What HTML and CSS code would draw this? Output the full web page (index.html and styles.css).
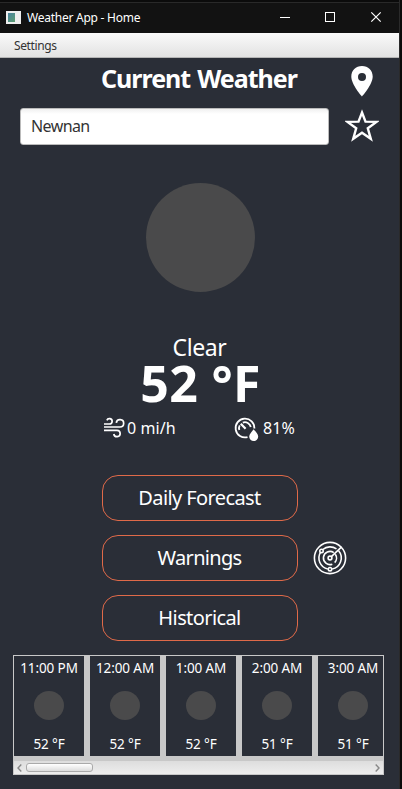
FILE: index.html
```html
<!DOCTYPE html>
<html lang="en">
<head>
<meta charset="utf-8">
<title>Weather App - Home</title>
<link rel="stylesheet" href="styles.css">
</head>
<body>
<div class="window">
  <header class="titlebar">
    <span class="app-icon"></span>
    <span class="app-name">Weather App - Home</span>
    <svg class="controls" width="112" height="30" viewBox="0 0 112 30" fill="none" stroke="#fff" shape-rendering="crispEdges">
      <path d="M0 14.500h10M45.500 9.500h9v9h-9z"/>
      <path d="M91.300 9.300l9.400 9.400M100.700 9.300l-9.400 9.400" stroke-width="1.200" shape-rendering="auto"/>
    </svg>
  </header>
  <nav class="menubar"><span>Settings</span></nav>
  <main>
    <div class="heading">
      <h1>Current Weather</h1>
      <svg class="pin" width="22" height="31" viewBox="0 0 22 31"><path fill="#fff" fill-rule="evenodd" d="M11 0C4.800 0 .3 4.500.3 10.600.3 18.600 11 30.500 11 30.500s10.700-11.900 10.700-19.900C21.700 4.500 17.200 0 11 0zM11 7a4 4 0 1 1 0 8 4 4 0 0 1 0-8z"/></svg>
    </div>
    <div class="search">
      <div class="field"><span>Newnan</span></div>
      <svg class="star" width="34" height="33" viewBox="0 0 34 33"><path fill="none" stroke="#fff" stroke-width="2.400" d="M17 3.500l3.500 9.100 11 .3-8.700 6.400 3 10.500L17 23.700l-8.800 6.100 3-10.500-8.700-6.400 11-.3z"/></svg>
    </div>
    <div class="moon"></div>
    <div class="condition"><span>Clear</span></div>
    <div class="temperature"><span>52 °F</span></div>
    <div class="stats">
      <svg class="wind" width="23" height="22" viewBox="0 0 23 22" fill="none" stroke="#fff" stroke-width="1.700">
        <path d="M1 8H6.500a2.700 2.700 0 1 0-2.600-3.600"/>
        <path d="M1 11H17a3.700 3.700 0 1 0-3.700-4.200"/>
        <path d="M1 14.300H14a3.200 3.200 0 1 1-3.200 3.700"/>
      </svg>
      <span class="wind-value">0 mi/h</span>
      <svg class="humid" width="26" height="25" viewBox="0 0 26 25" fill="none" stroke="#fff" stroke-width="1.800">
        <path d="M13.500 21.100A9.400 9.400 0 1 1 20.400 12.500"/>
        <path d="M5.300 14a6 6 0 0 1 .4-4.600M8.800 6.600a6 6 0 0 1 8 4.400"/>
        <path d="M6.800 7.800l4.800 5" stroke-width="2.200"/>
        <path d="M19.700 13.200c1.800 2.500 4.500 4.800 4.500 7.300a4.500 4.500 0 0 1-9 0c0-2.500 2.700-4.800 4.500-7.300z" fill="#fff" stroke="none"/>
      </svg>
      <span class="humid-value">81%</span>
    </div>
    <div class="actions">
      <button><span class="t1">Daily Forecast</span></button>
      <button><span class="t2">Warnings</span></button>
      <svg class="radar" width="34" height="34" viewBox="0 0 34 34" fill="none" stroke="#fff" stroke-width="1.600">
        <circle cx="17" cy="17" r="15.600"/>
        <path d="M25.600 9.800A11.200 11.200 0 0 1 19.200 28M14.800 28A11.200 11.200 0 0 1 7.600 11.200M9.800 8.500A11.200 11.200 0 0 1 23.500 7.900"/>
        <path d="M22.300 13.200a6.600 6.600 0 0 1-.6 8.400M19.300 23.200A6.600 6.600 0 1 1 20.800 11.600"/>
        <path d="M18.400 15.600L28.600 5.900"/>
        <circle cx="17" cy="17" r="1.900"/>
        <circle cx="8.500" cy="9.900" r="1.700"/>
        <circle cx="17" cy="28.200" r="1.700"/>
      </svg>
      <button><span class="t3">Historical</span></button>
    </div>
    <section class="hours">
      <div class="cards">
        <article><span>11:00 PM</span><i></i><b>52 °F</b></article>
        <article><span>12:00 AM</span><i></i><b>52 °F</b></article>
        <article><span>1:00 AM</span><i></i><b>52 °F</b></article>
        <article><span>2:00 AM</span><i></i><b>51 °F</b></article>
        <article><span>3:00 AM</span><i></i><b>51 °F</b></article>
      </div>
      <div class="scrollbar">
        <svg width="5" height="8" viewBox="0 0 5 8" fill="none" stroke="#888" stroke-width="1.400"><path d="M4.300.5L1 4l3.300 3.500"/></svg>
        <span class="thumb"></span>
        <svg width="5" height="8" viewBox="0 0 5 8" fill="none" stroke="#888" stroke-width="1.400"><path d="M.7.5L4 4 .7 7.500"/></svg>
      </div>
    </section>
  </main>
</div>
</body>
</html>
```
FILE: styles.css
```css
* { box-sizing: border-box; }
body { margin: 0; background: #0b0b0b; overflow: hidden; font-family: "Noto Sans", sans-serif; color: #fff; }
.window { width: 400px; height: 789px; padding-top: 2px; border-right: 1px solid #2a2a2a; }
.titlebar { height: 31px; border-top: 1px solid #292929; background: #121212; display: flex; align-items: center; font-size: 12px; }
.app-icon { width: 15px; height: 13px; margin: -2px 6px 0; border: 2px solid #eee; border-right-width: 6px; background: linear-gradient(135deg, #4a84a0, #5c9d70); }
.app-name { letter-spacing: -.25px; line-height: 28px; margin-bottom: 1px; }
.controls { margin-left: auto; margin-right: 7px; }
.menubar { height: 25px; background: linear-gradient(#fafafa, #e2e2e2); border-bottom: 1px solid #b5b5b5; color: #333; font-size: 12px; line-height: 25px; padding-left: 14px; letter-spacing: -.37px; }
main { height: 731px; background: #2a2e37; }
.heading { height: 50px; display: flex; padding: 0 26px 0 101px; justify-content: space-between; }
h1 { margin: 0; font-size: 25px; line-height: 41px; white-space: nowrap; letter-spacing: -1px; word-spacing: 1.500px; }
.pin { margin-top: 8px; }
.search { display: flex; padding-left: 20px; height: 37px; }
.field { width: 309px; height: 37px; border: 1px solid #bbb; border-radius: 3px; background: linear-gradient(#f0f0f0, #fff 5px); color: #333; font-size: 16px; line-height: 35px; padding-left: 10px; letter-spacing: -.6px; }
.star { margin: 1px 0 0 16px; }
.moon { width: 109px; height: 109px; border-radius: 50%; background: #4a4a4b; margin: 38px auto 0 145.500px; }
.condition { margin-top: 39px; height: 32px; line-height: 32px; text-align: center; font-size: 23px; letter-spacing: -.4px; }
.temperature { height: 42px; line-height: 41px; text-align: center; font-size: 50px; font-weight: 700; letter-spacing: .3px; padding-left: 2px; }
.stats { display: flex; height: 25px; margin-top: 11px; padding-left: 103px; font-size: 16px; line-height: 24px; }
.wind-value { width: 108px; padding-left: 1px; letter-spacing: .1px; }
.humid-value { margin-left: 3px; letter-spacing: .1px; }
.actions { display: grid; grid-template-columns: 196px 34px; grid-auto-rows: 46px; gap: 14px 15px; padding: 34px 0 0 102px; align-items: center; }
button { grid-column: 1; height: 46px; border: 1px solid #df6a49; border-radius: 16px; background: none; color: #fff; font: 20px "Noto Sans", sans-serif; padding: 0 1px 2px 0; letter-spacing: -.6px; }
.t2 { letter-spacing: -.7px; }
.hours { width: 371px; height: 120px; border: 1px solid #c8c8c8; margin: 14px 0 0 13px; background: #c8c8c8; overflow: hidden; }
.cards { display: flex; gap: 6px; height: 100px; }
article { flex: 0 0 70px; background: #2a2e37; display: flex; flex-direction: column; align-items: center; font-size: 13.500px; line-height: 24px; white-space: nowrap; letter-spacing: -.1px; }
article i { width: 30px; height: 30px; border-radius: 50%; background: #4a4a4b; margin: 11px 0 12px; }
article b { font-weight: 400; }
.scrollbar { height: 13px; margin-top: 5px; background: linear-gradient(#ddd, #eee); display: flex; align-items: center; padding: 0 3px; }
.thumb { width: 67px; height: 9px; border: 1px solid #aaa; border-radius: 3px; background: linear-gradient(#fff, #ddd); margin: 0 auto 0 4px; }
```
